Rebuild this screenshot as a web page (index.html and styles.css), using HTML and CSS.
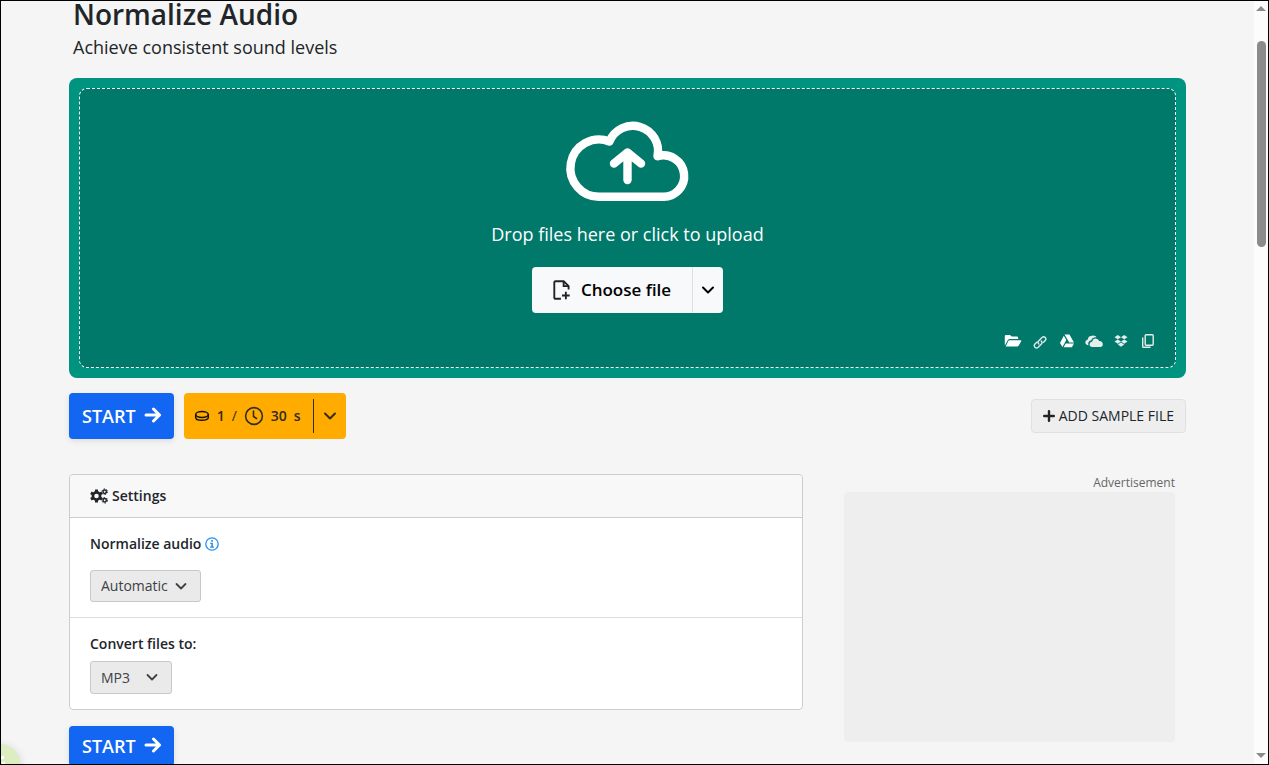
FILE: index.html
```html
<!DOCTYPE html>
<html lang="en">
<head>
<meta charset="utf-8">
<meta name="viewport" content="width=device-width, initial-scale=1">
<title>Normalize Audio</title>
<link rel="stylesheet" href="styles.css">
</head>
<body>
<div class="window">
  <main class="page">
    <div class="container">
      <header class="heading">
        <h1 class="title">Normalize Audio</h1>
        <p class="subtitle">Achieve consistent sound levels</p>
      </header>

      <section class="dropzone">
        <div class="drop-area">
          <svg class="cloud" viewBox="0 0 120 78" fill="none" stroke="currentColor" stroke-width="8.4" stroke-linecap="round" stroke-linejoin="round" aria-hidden="true">
            <path d="M32 73.7A28.6 28.6 0 1 1 41.500 18.500A25.2 25.2 0 0 1 89.500 33.200A20.7 20.7 0 1 1 94.500 73.7Z"/>
            <path d="M59.500 57V30M46 40.500L59.500 29.500L73 40.500"/>
          </svg>
          <p class="drop-text">Drop files here or click to upload</p>
          <div class="choose">
            <button class="choose-main" type="button">
              <svg class="file-icon" viewBox="0 0 18 20" fill="none" stroke="#222" stroke-width="1.700" aria-hidden="true">
                <path d="M8 18H3.200Q2 18 2 16.800V3.200Q2 2 3.200 2H10.500L15 6.500V9.500"/>
                <path d="M10.500 2V6.500H15M12.500 11.500V18.500M9 15H16"/>
              </svg>
              Choose file
            </button>
            <button class="choose-more" type="button" aria-label="More sources">
              <svg class="chevron" viewBox="0 0 14 14" fill="none" stroke="currentColor" stroke-width="2" stroke-linecap="round" stroke-linejoin="round"><path d="M2 4.500L7 9.500L12 4.500"/></svg>
            </button>
          </div>
          <div class="sources">
            <button type="button" aria-label="From device"><svg class="source" viewBox="0 0 18 16" fill="#fff"><path d="M.8 12.600V3.200Q.8 2 2 2H6L7.700 3.600H12.800Q14.200 3.600 14.200 5V6H5.800Q4.500 6 3.900 7Z"/><path d="M4.800 7.200H16.600Q17.700 7.200 17.200 8.200L14.600 12.800Q14.200 13.500 13.300 13.500H1.600Z"/></svg></button>
            <button type="button" aria-label="From link"><svg class="source" viewBox="0 0 16 16" fill="none" stroke="#dce9e8" stroke-width="1.400" stroke-linecap="round"><path d="M6.800 11Q5.200 9.300 6.800 7.700L10 4.500Q11.700 3 13.200 4.500Q14.600 6 13.200 7.600L11.500 9.300M9.200 8Q10.800 9.700 9.200 11.300L6.200 14.300Q4.500 15.800 3 14.300Q1.500 12.600 3 11L4.700 9.300"/></svg></button>
            <button type="button" aria-label="From Google Drive"><svg class="source" viewBox="0 0 16 16" fill="#fff"><path d="M5.600 1.500H10.400L15 9.500H10.300ZM4.800 2.700L7.300 7L3.400 13.900L1 9.900ZM6.700 10.500H15L12.900 14.200H4.600Z"/></svg></button>
            <button type="button" aria-label="From OneDrive"><svg class="source" viewBox="0 0 18 16" fill="#e6eeed"><path d="M3.600 12.300Q.3 12 .3 9.300Q.3 6.800 2.800 6.400Q3.200 3.300 6 3Q8 1.800 10.200 3Q11 3.400 11.400 4.200Q7.700 3.700 6.200 7.300Q3.300 7.800 3.200 10.800Q3.200 11.600 3.600 12.300Z"/><path d="M6.900 14Q4.500 13.800 4.500 11.300Q4.700 8.900 7.200 8.500Q7.700 5.700 10.400 5.500Q13.100 5.400 14.200 8Q17.800 8.400 17.800 11.300Q17.800 14 15.200 14Z"/></svg></button>
            <button type="button" aria-label="From Dropbox"><svg class="source" viewBox="0 0 16 16" fill="#e6eeed"><path d="M4.800 2L8 4.200L4.800 6.300L1.500 4.200ZM11.200 2L14.500 4.200L11.200 6.300L8 4.200ZM4.800 6.400L8 8.600L4.800 10.700L1.500 8.600ZM11.200 6.400L14.500 8.600L11.200 10.700L8 8.600ZM8 9.500L11.200 11.600L8 13.800L4.800 11.600Z"/></svg></button>
            <button type="button" aria-label="From clipboard"><svg class="source" viewBox="0 0 16 16" fill="none" stroke="#e6eeed" stroke-width="1.400"><rect x="5.200" y="1.700" width="8" height="10.600" rx="1"/><path d="M2.700 4.500V13.500Q2.700 14.300 3.500 14.300H10.500"/></svg></button>
          </div>
        </div>
      </section>

      <div class="actions">
        <button class="start" type="button">START
          <svg class="arrow" viewBox="0 0 18 18" fill="none" stroke="currentColor" stroke-width="3" stroke-linecap="round" stroke-linejoin="round" aria-hidden="true"><path d="M2 8H15.500M9.500 2L15.500 8L9.500 14"/></svg>
        </button>
        <button class="credits" type="button">
          <svg class="coin" viewBox="0 0 16 16" fill="none" stroke="#171300" stroke-width="1.500" aria-hidden="true"><ellipse cx="8" cy="6.500" rx="6.300" ry="2.900"/><path d="M1.700 6.500V9.500C1.700 13.300 14.300 13.300 14.300 9.500V6.500"/></svg>
          <span>1</span><span class="slash">/</span>
          <svg class="clock" viewBox="0 0 20 20" fill="none" stroke="currentColor" stroke-width="1.600" stroke-linecap="round" aria-hidden="true"><circle cx="10" cy="10" r="8.400"/><path d="M9.500 5V10.500L12.500 12.500"/></svg>
          <span>30</span><span class="unit">s</span>
          <span class="credits-more"><svg class="chevron" viewBox="0 0 14 14" fill="none" stroke="currentColor" stroke-width="2" stroke-linecap="round" stroke-linejoin="round"><path d="M2 4.500L7 9.500L12 4.500"/></svg></span>
        </button>
        <button class="sample" type="button">
          <svg class="plus" viewBox="0 0 12 12" stroke="currentColor" stroke-width="2.400" stroke-linecap="round" aria-hidden="true"><path d="M6 1.200V10.800M1.200 6H10.800"/></svg>
          ADD SAMPLE FILE
        </button>
      </div>

      <div class="columns">
        <div class="main-column">
          <section class="card">
            <h2 class="card-head">
              <svg class="gears" viewBox="0 0 18 16" fill="none" stroke="#212529" aria-hidden="true">
                <circle cx="6.500" cy="8" r="3.600" stroke-width="2.600"/>
                <path d="M6.500 1.500V4M6.500 12V14.500M.9 4.800L3 6M10 10L12.100 11.200M.9 11.200L3 10M10 6L12.100 4.800" stroke-width="3"/>
                <circle cx="14.700" cy="3.700" r="1.700" stroke-width="1.500"/>
                <circle cx="14.700" cy="3.700" r="2.800" stroke-width="1" stroke-dasharray="1.500 1.430"/>
                <circle cx="14.700" cy="12.300" r="1.700" stroke-width="1.500"/>
                <circle cx="14.700" cy="12.300" r="2.800" stroke-width="1" stroke-dasharray="1.500 1.430"/>
              </svg>
              Settings
            </h2>
            <div class="field spaced">
              <label class="label" for="mode">Normalize audio
                <svg class="info" viewBox="0 0 14 14" aria-hidden="true"><circle cx="7" cy="7" r="6.200" fill="none" stroke="#2490ee" stroke-width="1.300"/><path d="M6.200 3H7.900V4.700H6.200ZM5.200 5.800H7.900V9.600H9V10.800H5V9.600H6.300V7H5.200Z" fill="#2490ee"/></svg>
              </label>
              <div class="select-wrap">
                <select class="select" id="mode"><option>Automatic</option></select>
                <svg class="select-arrow" viewBox="0 0 14 14" fill="none" stroke="currentColor" stroke-width="1.800" stroke-linecap="round" stroke-linejoin="round"><path d="M2.500 5L7 9.500L11.500 5"/></svg>
              </div>
            </div>
            <div class="field">
              <label class="label" for="format">Convert files to:</label>
              <div class="select-wrap">
                <select class="select format" id="format"><option>MP3</option></select>
                <svg class="select-arrow" viewBox="0 0 14 14" fill="none" stroke="currentColor" stroke-width="1.800" stroke-linecap="round" stroke-linejoin="round"><path d="M2.500 5L7 9.500L11.500 5"/></svg>
              </div>
            </div>
          </section>
          <button class="start compact" type="button">START
            <svg class="arrow" viewBox="0 0 18 18" fill="none" stroke="currentColor" stroke-width="3" stroke-linecap="round" stroke-linejoin="round" aria-hidden="true"><path d="M2 8H15.500M9.500 2L15.500 8L9.500 14"/></svg>
          </button>
        </div>
        <aside class="ad">
          <p class="ad-label">Advertisement</p>
          <div class="ad-box"></div>
        </aside>
      </div>
    </div>
  </main>
  <div class="scrollbar" aria-hidden="true">
    <svg class="scroll-arrow" viewBox="0 0 10 6" fill="#8b8b8b"><path d="M5 0L10 5H0Z"/></svg>
    <div class="track"><div class="thumb"></div></div>
    <svg class="scroll-arrow" viewBox="0 0 10 6" fill="#8b8b8b"><path d="M0 0H10L5 5Z"/></svg>
  </div>
  <button class="help" type="button" aria-label="Cookie settings">
    <svg class="help-icon" viewBox="0 0 40 40" fill="#fff"><path d="M18 12H24V15H18ZM22 18H25V22H22Z"/></svg>
  </button>
</div>
</body>
</html>
```
FILE: styles.css
```css
* {
  box-sizing: border-box;
}

body {
  margin: 0;
  background: #f5f5f5;
  color: #212529;
  font-family: "Open Sans", "Noto Sans", sans-serif;
  font-size: 14px;
  line-height: 20px;
}

h1, h2, p {
  margin: 0;
}

button, select {
  font: inherit;
  color: inherit;
  border: 0;
  cursor: pointer;
}

svg {
  display: block;
  flex: none;
}

.window {
  position: relative;
  display: flex;
  height: 100vh;
  overflow: hidden;
  border: 1px solid #000;
}

.page {
  flex: 1;
  min-width: 0;
  padding: 0 68px;
}

.container {
  max-width: 1320px;
  margin: 0 auto;
}

.heading {
  padding: 0 4px 18px;
}

.title {
  padding-bottom: 7px;
  font-size: 28px;
  line-height: 26px;
  font-weight: 600;
}

.subtitle {
  font-size: 18px;
  line-height: 26px;
}

.dropzone {
  padding: 10px;
  border-radius: 8px;
  background: #009480;
}

.drop-area {
  display: flex;
  flex-direction: column;
  align-items: center;
  padding: 34px 18px 18px;
  border: 1px dashed #fff;
  border-radius: 8px;
  background: #00796b;
  color: #fff;
}

.cloud {
  width: 120px;
  height: 78px;
  overflow: visible;
}

.drop-text {
  margin: 20px 0;
  font-size: 18px;
  line-height: 26px;
}

.choose {
  display: flex;
  height: 46px;
  overflow: hidden;
  border-radius: 4px;
  background: #f8f9fa;
  color: #000;
}

.choose button {
  display: flex;
  align-items: center;
  background: none;
}

.choose .choose-main {
  gap: 9px;
  padding: 0 21px 0 20px;
  font-size: 17px;
  font-weight: 600;
}

.choose .choose-more {
  padding: 0 8px;
  border-left: 1px solid #dde1e6;
}

.file-icon {
  width: 20px;
  height: 22px;
}

.chevron {
  width: 14px;
  height: 14px;
}

.sources {
  display: flex;
  align-self: flex-end;
  gap: 9px;
  margin-top: 20px;
}

.sources button {
  padding: 0;
  background: none;
}

.source {
  width: 18px;
  height: 16px;
}

.actions {
  display: flex;
  align-items: center;
  gap: 10px;
  margin: 15px 0 35px;
}

.start {
  display: flex;
  align-items: center;
  gap: 8px;
  height: 46px;
  padding: 0 12px 0 13px;
  border-radius: 4px;
  background: #1266f1;
  box-shadow: 0 2px 6px #0000001a;
  color: #fff;
  font-size: 18px;
  font-weight: 600;
}

.compact {
  height: 40px;
}

.arrow {
  width: 18px;
  height: 18px;
}

.credits {
  display: flex;
  align-items: center;
  gap: 7px;
  height: 46px;
  padding: 0 9px 0 10px;
  border-radius: 4px;
  background: #ffab00;
  color: #332d20;
  font-weight: 600;
}

.slash {
  font-weight: 400;
}

.coin {
  width: 16px;
  height: 16px;
}

.clock {
  width: 20px;
  height: 20px;
}

.credits-more {
  display: flex;
  align-items: center;
  height: 34px;
  margin-left: 5px;
  padding-left: 9px;
  border-left: 1px solid #332d20;
}

.sample {
  display: flex;
  align-items: center;
  gap: 4px;
  height: 34px;
  margin-left: auto;
  padding: 0 11px;
  border: 1px solid #dee0e4;
  border-radius: 4px;
  background: #eee;
}

.plus {
  width: 12px;
  height: 12px;
}

.columns {
  display: grid;
  grid-template-columns: 734fr 383fr;
}

.card {
  margin-bottom: 16px;
  border: 1px solid #ccc;
  border-radius: 4px;
  background: #fff;
}

.card-head {
  display: flex;
  align-items: center;
  gap: 4px;
  height: 43px;
  padding: 0 20px;
  border-bottom: 1px solid #ccc;
  border-radius: 4px 4px 0 0;
  background: #f8f8f8;
  font-size: 14px;
  font-weight: 600;
}

.gears {
  width: 18px;
  height: 16px;
}

.field {
  display: flex;
  flex-direction: column;
  align-items: flex-start;
  gap: 7px;
  padding: 16px 20px 15px;
}

.spaced {
  gap: 16px;
  border-bottom: 1px solid #ddd;
}

.label {
  display: flex;
  align-items: center;
  gap: 4px;
  font-weight: 600;
}

.info {
  width: 14px;
  height: 14px;
}

.select-wrap {
  position: relative;
}

.select {
  appearance: none;
  display: block;
  height: 32px;
  padding: 0 32px 0 10px;
  border: 1px solid #c8c8c8;
  border-radius: 3px;
  background: #eaeaea;
  color: #3d4146;
}

.format {
  height: 33px;
  padding-right: 40px;
}

.select-arrow {
  position: absolute;
  top: 9px;
  right: 13px;
  width: 14px;
  height: 14px;
  color: #3d4146;
  pointer-events: none;
}

.ad {
  padding: 0 11px 0 41px;
}

.ad-label {
  color: #666;
  font-size: 12px;
  line-height: 18px;
  text-align: right;
}

.ad-box {
  height: 250px;
  border-radius: 4px;
  background: #eee;
}

.scrollbar {
  display: flex;
  flex-direction: column;
  align-items: center;
  width: 14px;
  padding: 5px 0;
  background: #fcfcfc;
}

.scroll-arrow {
  width: 10px;
  height: 6px;
}

.track {
  flex: 1;
  padding-top: 29px;
}

.thumb {
  width: 9px;
  height: 29%;
  border-radius: 5px;
  background: #8b8b8b;
}

.help {
  position: absolute;
  left: -21px;
  bottom: -20px;
  width: 40px;
  height: 40px;
  padding: 0;
  border-radius: 50%;
  background: #dcedc1;
  box-shadow: 0 2px 10px #00000026;
}

.help-icon {
  width: 40px;
  height: 40px;
}
```
